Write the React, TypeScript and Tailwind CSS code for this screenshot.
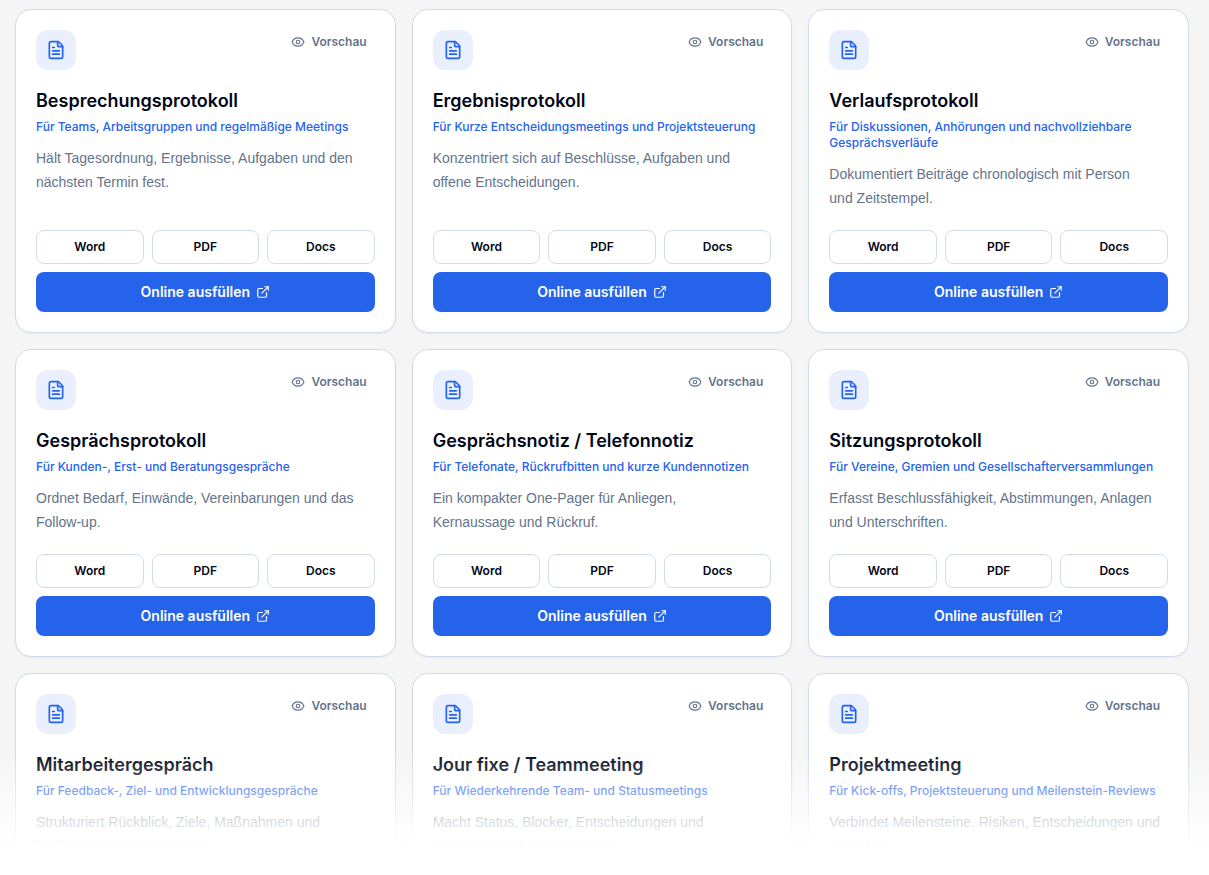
import { ExternalLink, Eye, FileText } from "lucide-react";

const templates = [
  {
    title: "Besprechungsprotokoll",
    audience: "Für Teams, Arbeitsgruppen und regelmäßige Meetings",
    description:
      "Hält Tagesordnung, Ergebnisse, Aufgaben und den\nnächsten Termin fest.",
  },
  {
    title: "Ergebnisprotokoll",
    audience: "Für Kurze Entscheidungsmeetings und Projektsteuerung",
    description:
      "Konzentriert sich auf Beschlüsse, Aufgaben und\noffene Entscheidungen.",
  },
  {
    title: "Verlaufsprotokoll",
    audience: "Für Diskussionen, Anhörungen und nachvollziehbare Gesprächsverläufe",
    description:
      "Dokumentiert Beiträge chronologisch mit Person\nund Zeitstempel.",
  },
  {
    title: "Gesprächsprotokoll",
    audience: "Für Kunden-, Erst- und Beratungsgespräche",
    description: "Ordnet Bedarf, Einwände, Vereinbarungen und das\nFollow-up.",
  },
  {
    title: "Gesprächsnotiz / Telefonnotiz",
    audience: "Für Telefonate, Rückrufbitten und kurze Kundennotizen",
    description: "Ein kompakter One-Pager für Anliegen,\nKernaussage und Rückruf.",
  },
  {
    title: "Sitzungsprotokoll",
    audience: "Für Vereine, Gremien und Gesellschafterversammlungen",
    description:
      "Erfasst Beschlussfähigkeit, Abstimmungen, Anlagen\nund Unterschriften.",
  },
];

// the last row is only hinted at, so its cards have no actions
const teasers = [
  {
    title: "Mitarbeitergespräch",
    audience: "Für Feedback-, Ziel- und Entwicklungsgespräche",
    description:
      "Strukturiert Rückblick, Ziele, Maßnahmen und\nbeidseitige Vereinbarungen.",
  },
  {
    title: "Jour fixe / Teammeeting",
    audience: "Für Wiederkehrende Team- und Statusmeetings",
    description:
      "Macht Status, Blocker, Entscheidungen und\nVerantwortlichkeiten sichtbar.",
  },
  {
    title: "Projektmeeting",
    audience: "Für Kick-offs, Projektsteuerung und Meilenstein-Reviews",
    description:
      "Verbindet Meilensteine, Risiken, Entscheidungen und\nAufgaben.",
  },
];

const formats = ["Word", "PDF", "Docs"];

type Template = (typeof templates)[number] & { teaser?: boolean };

const Actions = () => (
  <div className="mt-auto pt-5">
    <div className="grid grid-cols-3 gap-2">
      {formats.map((format) => (
        <button
          key={format}
          type="button"
          className="rounded-lg border border-[#d3dbea] bg-white py-2 text-xs font-semibold text-[#020617]"
        >
          {format}
        </button>
      ))}
    </div>
    <a
      href="#"
      className="mt-2 flex h-10 items-center justify-center gap-1.5 rounded-lg bg-[#2563eb] text-sm font-semibold text-white"
    >
      Online ausfüllen
      <ExternalLink className="size-3.5" />
    </a>
  </div>
);

const TemplateCard = ({ title, audience, description, teaser }: Template) => (
  <article className="flex flex-col rounded-2xl border border-[#d3dbea] bg-white p-5 shadow-xs">
    <div className="flex items-start justify-between">
      <div className="flex size-10 items-center justify-center rounded-xl bg-[#e9effd] text-[#2563eb]">
        <FileText className="size-5" />
      </div>
      <button
        type="button"
        className="flex items-center gap-1.5 rounded-md px-2 py-1 text-xs font-semibold text-[#64748b]"
      >
        <Eye className="size-3.5" />
        Vorschau
      </button>
    </div>
    <h3 className="mt-[17px] text-lg font-semibold text-[#020617]">{title}</h3>
    <p className="mt-1 text-xs font-medium text-[#2563eb]">{audience}</p>
    <p className="mt-[11px] font-['Liberation_Sans',sans-serif] text-sm leading-6 whitespace-pre-line text-[#64748b]">
      {description}
    </p>
    {!teaser && <Actions />}
  </article>
);

export default function App() {
  return (
    <main className="min-h-screen bg-white font-['Inter',sans-serif]">
      <section className="relative bg-[#f5f5f5] pt-[9px] pr-5 pl-[15px]">
        <div className="grid grid-cols-3 gap-4">
          {templates.map((template) => (
            <TemplateCard key={template.title} {...template} />
          ))}
          {teasers.map((template) => (
            <TemplateCard key={template.title} {...template} teaser />
          ))}
        </div>
        {/* fades the last row out */}
        <div className="pointer-events-none absolute inset-x-0 bottom-0 h-32 bg-linear-to-t from-white from-25% to-white/0" />
      </section>
    </main>
  );
}
